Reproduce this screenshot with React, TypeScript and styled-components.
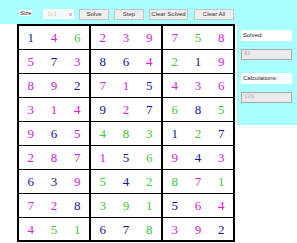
import React from 'react'
import styled, { createGlobalStyle } from 'styled-components'

type Tone = 'n' | 'm' | 'g'

const tones: Record<Tone, string> = {
  n: '#14149a',
  m: '#d424d8',
  g: '#3ccc3c',
}

// each cell: digit + colour code
const board: string[][] = [
  ['1n 4m 6g', '2m 3m 9m', '7m 5g 8m'],
  ['5m 7n 3m', '8n 6n 4m', '2g 1n 9m'],
  ['8m 9m 2n', '7m 1m 5n', '4m 3m 6m'],
  ['3m 1m 4m', '9n 2m 7n', '6g 8n 5g'],
  ['9m 6n 5m', '4g 8g 3g', '1n 2g 7n'],
  ['2m 8m 7m', '1m 5n 6g', '9m 4n 3m'],
  ['6n 3n 9m', '5g 4n 2g', '8g 7m 1g'],
  ['7m 2m 8n', '3g 9g 1g', '5n 6m 4m'],
  ['4m 5g 1g', '6n 7n 8g', '3m 9m 2n'],
]

const GlobalStyle = createGlobalStyle`
  html, body {
    margin: 0;
    padding: 0;
    background: #ffffff;
  }
`

const Page = styled.div`
  width: 297px;
  height: 243px;
  overflow: hidden;
  font-family: 'Liberation Sans', Arial, sans-serif;
`

const Toolbar = styled.div`
  height: 24px;
  background: #aaffff;
  display: flex;
  align-items: flex-start;
  padding: 9px 0 0 19px;
  box-sizing: border-box;
`

const SizeLabel = styled.span`
  background: #ffffff;
  font-size: 6px;
  line-height: 6px;
  height: 6px;
  margin-top: 1px;
  padding: 0 1px;
  width: 11px;
  color: #222;
`

const SizeSelect = styled.div`
  width: 31px;
  height: 10px;
  margin-left: 11px;
  background: #ffffff;
  display: flex;
  align-items: center;
  justify-content: space-between;
  padding: 0 2px 0 4px;
  box-sizing: border-box;
  font-size: 6px;
  color: #c8c0a0;
`

const Arrow = styled.span`
  color: #666;
  font-size: 6px;
`

const Button = styled.button<{ $w: number; $gap: number }>`
  width: ${(p) => p.$w}px;
  height: 11px;
  margin-left: ${(p) => p.$gap}px;
  padding: 0;
  background: #eeeeee;
  border: 1px solid #c4c4c4;
  font-family: 'Liberation Sans', Arial, sans-serif;
  font-size: 6px;
  line-height: 9px;
  color: #333;
`

const Main = styled.div`
  display: flex;
  align-items: flex-start;
`

const Board = styled.div`
  margin-left: 17px;
  width: 218px;
  border: 2px solid #000000;
  box-sizing: border-box;
  display: flex;
  flex-direction: column;
  background: #ffffff;
`

const Row = styled.div`
  display: flex;
  height: 24px;
  border-bottom: 1px solid #000000;
  box-sizing: border-box;

  &:last-child {
    border-bottom: none;
    height: 22px;
  }
`

const Segment = styled.div`
  width: 70px;
  display: grid;
  grid-template-columns: repeat(3, 1fr);
  align-items: center;

  & + & {
    border-left: 2px solid #000000;
  }
`

const Digit = styled.span<{ $tone: Tone }>`
  text-align: center;
  font-family: 'Liberation Serif', 'Times New Roman', serif;
  font-size: 13px;
  line-height: 23px;
  color: ${(p) => tones[p.$tone]};
`

const Sidebar = styled.div`
  flex: 1;
  margin-left: 2px;
  height: 101px;
  background: #aaffff;
  padding: 6px 5px 0 4px;
  box-sizing: border-box;
  display: flex;
  flex-direction: column;
`

const StatLabel = styled.div`
  background: #ffffff;
  height: 11px;
  font-size: 6px;
  line-height: 11px;
  padding-left: 2px;
  color: #222;
`

const StatValue = styled.div`
  margin-top: 8px;
  margin-bottom: 13px;
  height: 11px;
  background: #ececec;
  border: 1px solid #a8a8a8;
  box-sizing: border-box;
  font-size: 6px;
  line-height: 7px;
  padding-left: 2px;
  color: #aaa;
`

export default function App() {
  return (
    <Page>
      <GlobalStyle />
      <Toolbar>
        <SizeLabel>Size</SizeLabel>
        <SizeSelect>
          3x3 <Arrow>v</Arrow>
        </SizeSelect>
        <Button $w={30} $gap={5}>Solve</Button>
        <Button $w={30} $gap={5}>Step</Button>
        <Button $w={39} $gap={5}>Clear Solved</Button>
        <Button $w={40} $gap={6}>Clear All</Button>
      </Toolbar>
      <Main>
        <Board>
          {board.map((row, r) => (
            <Row key={r}>
              {row.map((seg, s) => (
                <Segment key={s}>
                  {seg.split(' ').map((cell, c) => (
                    <Digit key={c} $tone={cell[1] as Tone}>
                      {cell[0]}
                    </Digit>
                  ))}
                </Segment>
              ))}
            </Row>
          ))}
        </Board>
        <Sidebar>
          <StatLabel>Solved:</StatLabel>
          <StatValue>81</StatValue>
          <StatLabel>Calculations:</StatLabel>
          <StatValue>126</StatValue>
        </Sidebar>
      </Main>
    </Page>
  )
}
